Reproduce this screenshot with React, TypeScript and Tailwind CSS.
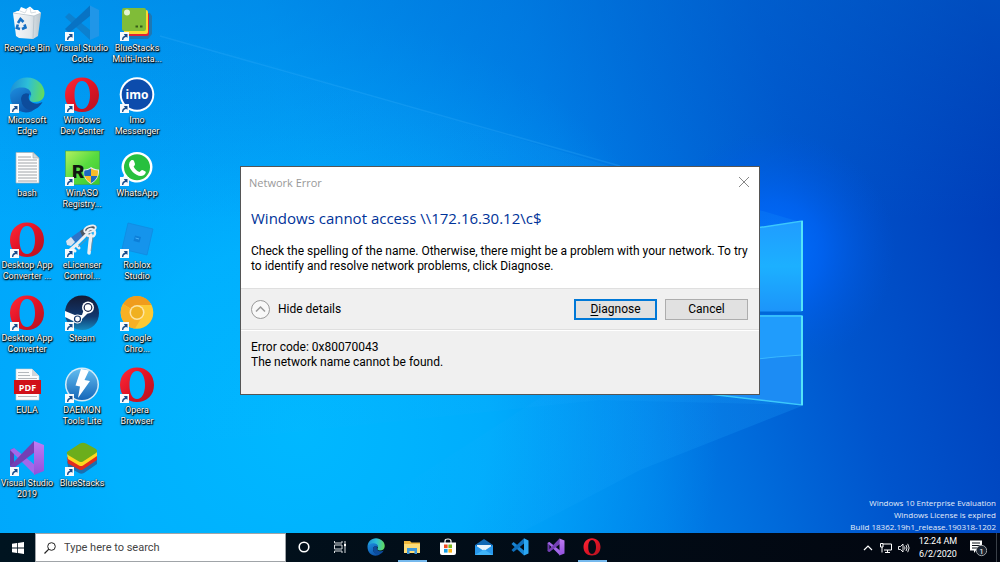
import type { ReactNode } from "react";

type DesktopIcon = {
  label: string;
  icon: ReactNode;
  shortcut?: boolean;
};

// gradients shared by the desktop and taskbar icons
const Defs = () => (
  <svg className="absolute h-0 w-0" aria-hidden="true">
    <defs>
      <linearGradient id="opera" x1="0" y1="0" x2="1" y2="1">
        <stop offset="0" stopColor="#ff2a38" />
        <stop offset="0.5" stopColor="#e01325" />
        <stop offset="1" stopColor="#b01420" />
      </linearGradient>
      <linearGradient id="edgeTop" x1="0" y1="0.4" x2="1" y2="0.5">
        <stop offset="0" stopColor="#1c8fd6" />
        <stop offset="0.5" stopColor="#2dbfd8" />
        <stop offset="1" stopColor="#62dc5c" />
      </linearGradient>
      <linearGradient id="edgeLow" x1="0" y1="0" x2="0.6" y2="1">
        <stop offset="0" stopColor="#1d8fe0" />
        <stop offset="1" stopColor="#0c52a8" />
      </linearGradient>
      <linearGradient id="green" x1="0" y1="0" x2="1" y2="1">
        <stop offset="0" stopColor="#b4f060" />
        <stop offset="0.5" stopColor="#58dc40" />
        <stop offset="1" stopColor="#3cc830" />
      </linearGradient>
      <linearGradient id="steam" x1="0" y1="0" x2="0" y2="1">
        <stop offset="0" stopColor="#141a34" />
        <stop offset="0.6" stopColor="#12386e" />
        <stop offset="1" stopColor="#1788bc" />
      </linearGradient>
      <linearGradient id="daemon" x1="0" y1="0" x2="0" y2="1">
        <stop offset="0" stopColor="#62bdf0" />
        <stop offset="1" stopColor="#1566b8" />
      </linearGradient>
      <linearGradient id="bin" x1="0" y1="0" x2="1" y2="0">
        <stop offset="0" stopColor="#f6f8fa" />
        <stop offset="0.6" stopColor="#e2e8ec" />
        <stop offset="1" stopColor="#b8c4cc" />
      </linearGradient>
      <linearGradient id="purple" x1="0" y1="0" x2="0" y2="1">
        <stop offset="0" stopColor="#c07cf4" />
        <stop offset="1" stopColor="#9150dc" />
      </linearGradient>
    </defs>
  </svg>
);

const Svg = ({ children, className = "size-9" }: { children: ReactNode; className?: string }) => (
  <svg viewBox="0 0 36 36" className={className} aria-hidden="true">
    {children}
  </svg>
);

const RecycleBin = () => (
  <Svg>
    <path d="M4 8 L8 6 L29 6 L32 8 L29 31 L24 34 L10 33 L7 31 Z" fill="url(#bin)" />
    <path d="M4 8 L10 6 L12 2 L17 4 L21 1.500 L25 5 L29 5 L32 8 L25 11 L10 10 Z" fill="#fff" />
    <path d="M4 8 L25 11 L32 8 M25 11 L24 34" fill="none" stroke="#b4c2cc" strokeWidth="0.8" />
    <path d="M11 6 L16 8 L18 4 M21 3 L22 8 L27 7" fill="none" stroke="#ccd4da" strokeWidth="0.8" />
    <g fill="none" stroke="#1670c4" strokeWidth="2.600">
      <path d="M9 18 L11.500 14 L14.500 17" />
      <path d="M15.500 19.500 L16.500 22.500 L13 24" />
      <path d="M11 24 L7.800 23 L8.800 19.500" />
    </g>
  </Svg>
);

const VsCode = ({ className, faded }: { className?: string; faded?: boolean }) => (
  <Svg className={className}>
    <path d="M1 12 L5 8 L26 25 V35 Z" fill={faded ? "#0c80cf" : "#1785d4"} />
    <path d="M26 0.500 V11 L5 28 L1 24 Z" fill={faded ? "#0873c4" : "#0e6fbc"} />
    <path d="M26 0.500 L35 5 V31 L26 35 Z" fill={faded ? "#2096e8" : "#2ba6f2"} />
  </Svg>
);

const VisualStudio = ({ className }: { className?: string }) => (
  <Svg className={className}>
    <path d="M1 10 L5 8 V28 L1 26 Z" fill="#6a3aa8" />
    <path d="M1 10 L5 8 L26 25 V35 Z" fill="#a368ea" />
    <path d="M25 1 L26 12 L5 28 L1 26 Z" fill="#7440b4" />
    <path d="M25 1 L35 5 V31 L25 35 Z" fill="url(#purple)" />
  </Svg>
);

const MultiInstance = () => (
  <Svg>
    <path d="M10 8 H31 L33 11 V29 L29 34 H11 Z" fill="#1d78b4" />
    <rect x="7" y="8" width="23" height="23" rx="2" fill="#e02434" />
    <rect x="5" y="5" width="24" height="24" rx="2" fill="#f8dc30" />
    <rect x="3" y="3" width="24" height="23" rx="2" fill="#80bc38" />
    <circle cx="8" cy="7.500" r="3" fill="#e4f4d0" />
    <path d="M16.500 21.500 h2.500 M21 21.500 h2.500" stroke="#375c18" strokeWidth="2" />
  </Svg>
);

const Edge = ({ className }: { className?: string }) => (
  <Svg className={className}>
    <path d="M1 18 C1 8 8 0.500 18 0.500 C28 0.500 35.500 8 35.500 16 C35.500 22 31 25 26 25 C22 25 20 23.500 21 21 C23 18 21 12 13 12 C6 12 2 16 1 18 Z" fill="url(#edgeTop)" />
    <path d="M1 18 C3 12 8 10 14 10.500 C20 11 23 15 22 19 C20 15 12 16 12 22 C12 29 19 33 27 31 C24 34 21 35.500 17 35.500 C8 35 1 28 1 18 Z" fill="url(#edgeLow)" />
    <path d="M12 22 C12 17 17 15 20.500 17 C19 20 19 25 26 26.500 C29 27 31.500 26 33.500 25 C31 30 26 33 22 33 C16 32.500 12 28 12 22 Z" fill="#0d4c9c" />
  </Svg>
);

const Opera = ({ className }: { className?: string }) => (
  <Svg className={className}>
    <path
      fillRule="evenodd"
      d="M18 0.500 C28 0.500 35 8 35 18 C35 28 28 35 18 35 C8 35 1 28 1 18 C1 8 8 0.500 18 0.500 Z M18 4 C13 4 10.500 10 10.500 18 C10.500 26 13 32 18 32 C23 32 26 26 26 18 C26 10 23 4 18 4 Z"
      fill="url(#opera)"
    />
  </Svg>
);

const Imo = () => (
  <Svg>
    <circle cx="18" cy="17.500" r="17.300" fill="#fff" />
    <circle cx="18" cy="17.500" r="15.300" fill="#0c4cac" />
    <text x="18" y="21.500" textAnchor="middle" fontFamily="Open Sans, sans-serif" fontWeight="700" fontSize="12" fill="#fff">
      imo
    </text>
  </Svg>
);

const TextFile = () => (
  <Svg>
    <path d="M7 2.500 H24 L30 8 V33 H7 Z" fill="#fdfdfd" stroke="#a8b0b4" strokeWidth="0.700" />
    <path d="M24 2.500 V8 H30 Z" fill="#d4dadc" stroke="#9aa4aa" strokeWidth="0.600" />
    <path d="M9 7 H22 M9 10 H28 M9 13 H28 M9 16 H28 M9 19 H28 M9 22 H28 M9 25 H28 M9 28 H28 M9 31 H28" stroke="#a0a4a8" strokeWidth="1" />
  </Svg>
);

const WinAso = () => (
  <Svg>
    <rect x="1.500" y="1" width="34" height="33.500" fill="url(#green)" stroke="#48a840" strokeWidth="0.600" />
    <text x="8" y="28" fontFamily="Roboto, sans-serif" fontWeight="900" fontSize="19" fill="#101810">
      R
    </text>
    <path d="M27 17 C30 19 33 19.500 35 19.500 C35.500 27 32 31 27 34 C22 31 19 27 19.500 19.500 C22 19.500 25 19 27 17 Z" fill="#e8eef4" />
    <path d="M27 18.500 V26 H20.500 C20 24 20 22 20.500 20.500 Q24 20.500 27 18.500 Z M27 26 H33.500 C32 29.500 30 31.500 27 33 Z" fill="#1c68c0" />
    <path d="M27 18.500 V26 H33.500 C34 24 34 22 34 20.500 Q30 20.500 27 18.500 Z M27 26 H20.500 C22 29.500 24 31.500 27 33 Z" fill="#f8bc28" />
  </Svg>
);

const WhatsApp = () => (
  <Svg>
    <path d="M18 2 C27 2 33.500 9 33.500 17 C33.500 26 26 32.500 18 32.500 C15 32.500 12.500 32 10.500 30.500 L2.500 33 L5 25 C3.500 22 2.500 20 2.500 17 C2.500 9 9 2 18 2 Z" fill="#fff" />
    <circle cx="18" cy="17.300" r="13" fill="#27c03e" />
    <path d="M12.500 10 Q14.500 9.500 15 11 L16 14 Q16.200 15 14.600 16.500 C16 19.500 18 21 20.500 22 L22.500 20.200 Q23 19.800 24 20.200 L26.500 21.500 C27.500 22.500 25.500 26 22 26 C16 26 10 19 10 14.500 Q10 11.500 12.500 10 Z" fill="#fff" />
  </Svg>
);

const License = () => (
  <Svg>
    <path d="M2 19 L16 9 L20 14 L7 24 L3 23 Z" fill="#2d74c8" />
    <path d="M2 19 L7 15 L11 20 L7 24 L3 23 Z" fill="#d8e4f0" />
    <path d="M16 9 L26 3 L33 4 L30 9 L19 16 Z" fill="#4c5864" />
    <g fill="none" stroke="#eceff2" strokeLinecap="round">
      <ellipse cx="26" cy="7" rx="6" ry="3" strokeWidth="2" transform="rotate(-20 26 7)" />
      <path d="M23 12 L13 22 L5 29 M12 23 L15 26 M8 26 L11 29" strokeWidth="3" />
      <path d="M27 13 L26 21 L25 31" strokeWidth="3.500" />
      <circle cx="27" cy="11" r="4" strokeWidth="2.500" />
    </g>
    <path d="M25 15 L14 25 M29 15 L27 29" stroke="#7c8894" strokeWidth="0.800" />
  </Svg>
);

const Roblox = () => (
  <Svg>
    <path d="M9 1 L34 7 L28 33 L3 27 Z" fill="#1594ec" stroke="#108ae0" strokeWidth="0.800" />
    <path d="M16 13.500 L22 15 L20.500 20.500 L14.500 19 Z" fill="#0d7fd8" />
    <path d="M16.500 16 L20 17" stroke="#48b4fc" strokeWidth="1" />
  </Svg>
);

const Steam = () => (
  <Svg>
    <path d="M1 18 C1 8 8 0.500 18 0.500 C28 0.500 35 8 35 18 C35 28 28 35 18 35 C10 35 4 30 2 24 Z" fill="url(#steam)" />
    <path d="M1 16 L12 20.500 L18 20 L20 14 L26 16 L18 24 C18 28 12 30 9 26 L1 22 Z" fill="#fff" />
    <circle cx="24" cy="12.500" r="6" fill="#fff" />
    <circle cx="24" cy="12.500" r="4.400" fill="#16244a" />
    <circle cx="24" cy="12.500" r="3.200" fill="#fff" />
    <circle cx="13.500" cy="24" r="4.500" fill="#fff" />
    <circle cx="13.500" cy="24" r="3" fill="none" stroke="#14356a" strokeWidth="1.200" />
  </Svg>
);

const Canary = () => (
  <Svg>
    <circle cx="18" cy="17.500" r="16.300" fill="#fcc934" />
    <path d="M18 17.500 L4 9 A16.300 16.300 0 0 1 32.500 10 H18 Z" fill="#f09c1c" />
    <path d="M4 9 A16.300 16.300 0 0 0 16 33.600 L23 22 Z" fill="#f8b024" />
    <circle cx="18" cy="17.500" r="7.500" fill="#fce4a4" />
    <circle cx="18" cy="17.500" r="6" fill="#f0b020" />
  </Svg>
);

const Pdf = () => (
  <Svg>
    <path d="M7 2 H23 L30 9 V33 H7 Z" fill="#fbfbfb" stroke="#c4ccd0" strokeWidth="0.600" />
    <path d="M23 2 V9 H30 Z" fill="#d0d6da" />
    <path d="M9 5.500 H20 M9 8.500 H21 M9 11.500 H28 M9 29.500 H28" stroke="#b4b8bc" strokeWidth="1.200" />
    <rect x="5" y="13" width="27" height="14" fill="#d01018" />
    <text x="18.500" y="23.500" textAnchor="middle" fontFamily="Open Sans, sans-serif" fontWeight="700" fontSize="9" fill="#fff">
      PDF
    </text>
  </Svg>
);

const Daemon = () => (
  <Svg>
    <circle cx="18" cy="17.500" r="17" fill="#d6ecf8" />
    <circle cx="18" cy="17.500" r="15.500" fill="url(#daemon)" />
    <path d="M17 2 L25 3.500 L20.500 13 L26 14 L14 31 L16 19.500 L11.500 18.500 Z" fill="#fff" />
  </Svg>
);

const BlueStacks = () => (
  <Svg>
    <path d="M3 21 L18 28 L33 19 V24 L20 33 Q17 34.500 15 33 L4 27 Z" fill="#1a6fb0" />
    <path d="M3 17 L18 24 L33 15 V20 L19 29.500 Q17 30.500 15 29.500 L4 23.500 Z" fill="#e02c20" />
    <path d="M3 14 L18 20 L33 12 V16 L19 25.500 Q17 26.500 15 25.500 L4 19 Z" fill="#fcd820" />
    <path d="M3 12 L16 3.500 Q19 2 22 3.500 L32 9 Q34 11 32 13 L19 21.500 Q17 22.500 15 21.500 L4 15 Q2 13.500 3 12 Z" fill="#6cae1c" />
  </Svg>
);

const desktopIcons: DesktopIcon[] = [
  { label: "Recycle Bin", icon: <RecycleBin /> },
  { label: "Microsoft\nEdge", icon: <Edge />, shortcut: true },
  { label: "bash", icon: <TextFile /> },
  { label: "Desktop App\nConverter ...", icon: <Opera />, shortcut: true },
  { label: "Desktop App\nConverter", icon: <Opera />, shortcut: true },
  { label: "EULA", icon: <Pdf /> },
  { label: "Visual Studio\n2019", icon: <VisualStudio />, shortcut: true },
  { label: "Visual Studio\nCode", icon: <VsCode faded />, shortcut: true },
  { label: "Windows\nDev Center", icon: <Opera />, shortcut: true },
  { label: "WinASO\nRegistry...", icon: <WinAso />, shortcut: true },
  { label: "eLicenser\nControl...", icon: <License />, shortcut: true },
  { label: "Steam", icon: <Steam />, shortcut: true },
  { label: "DAEMON\nTools Lite", icon: <Daemon />, shortcut: true },
  { label: "BlueStacks", icon: <BlueStacks />, shortcut: true },
  { label: "BlueStacks\nMulti-Insta...", icon: <MultiInstance />, shortcut: true },
  { label: "Imo\nMessenger", icon: <Imo />, shortcut: true },
  { label: "WhatsApp", icon: <WhatsApp />, shortcut: true },
  { label: "Roblox\nStudio", icon: <Roblox />, shortcut: true },
  { label: "Google\nChro...", icon: <Canary />, shortcut: true },
  { label: "Opera\nBrowser", icon: <Opera />, shortcut: true },
];

const ShortcutArrow = () => (
  <svg viewBox="0 0 9 9" className="absolute bottom-0 left-px size-[9px]" aria-hidden="true">
    <rect width="9" height="9" fill="#f6fafc" />
    <path d="M2 8 C2 5.500 3 4 5 3.700 L3.800 2 H7.500 V5.800 L6.200 4.900 C4.500 5.200 3.500 6 3.300 8 Z" fill="#184c8c" />
  </svg>
);

const Wallpaper = () => (
  <svg viewBox="0 0 1000 533" preserveAspectRatio="none" className="absolute inset-0 h-full w-full" aria-hidden="true">
    <defs>
      <linearGradient id="base" x1="0" y1="0.300" x2="1" y2="0.150">
        <stop offset="0" stopColor="#00a8fc" />
        <stop offset="0.300" stopColor="#009cf8" />
        <stop offset="0.550" stopColor="#007ee8" />
        <stop offset="0.780" stopColor="#0054cc" />
        <stop offset="1" stopColor="#003ab6" />
      </linearGradient>
      <radialGradient id="low" gradientUnits="userSpaceOnUse" cx="300" cy="430" r="420">
        <stop offset="0" stopColor="#00b8ff" />
        <stop offset="0.450" stopColor="#00b4ff" stopOpacity="0.800" />
        <stop offset="1" stopColor="#00a0f8" stopOpacity="0" />
      </radialGradient>
      <radialGradient id="glow" gradientUnits="userSpaceOnUse" cx="775" cy="250" r="120">
        <stop offset="0" stopColor="#0070ff" />
        <stop offset="0.400" stopColor="#0066fa" stopOpacity="0.700" />
        <stop offset="1" stopColor="#0058e0" stopOpacity="0" />
      </radialGradient>
      <linearGradient id="top" x1="0" y1="0" x2="0" y2="1">
        <stop offset="0" stopColor="#0070d0" stopOpacity="0.350" />
        <stop offset="1" stopColor="#0070d0" stopOpacity="0" />
      </linearGradient>
      <linearGradient id="beam" x1="0" y1="0" x2="1" y2="0">
        <stop offset="0" stopColor="#20b0ff" stopOpacity="0" />
        <stop offset="1" stopColor="#20a8ff" stopOpacity="0.450" />
      </linearGradient>
      <linearGradient id="pane" x1="0" y1="0" x2="0" y2="1">
        <stop offset="0" stopColor="#209cff" />
        <stop offset="0.500" stopColor="#1cb0ff" />
        <stop offset="1" stopColor="#1c94fa" />
      </linearGradient>
    </defs>
    <rect width="1000" height="533" fill="url(#base)" />
    <rect width="1000" height="533" fill="url(#low)" />
    <rect width="1000" height="220" fill="url(#top)" />
    <rect width="1000" height="533" fill="url(#glow)" />
    <path d="M120 20 L640 175 L800 222 V405 L600 400 L120 450 Z" fill="url(#beam)" opacity="0.350" />
    <path d="M560 385 L700 394 L802 406 L640 470 L520 533 H330 Z" fill="url(#beam)" opacity="0.500" />
    <path d="M160 36 L620 166" stroke="#38b0fa" strokeOpacity="0.250" strokeWidth="1.500" />
    <path d="M640 246 L802 221 V312 H640 Z" fill="url(#pane)" />
    <path d="M640 315 H802 V405 L640 386 Z" fill="#209cfc" />
    <path d="M640 380 Q730 360 802 355 V405 L640 386 Z" fill="#1c8cf4" />
    <path d="M700 368 Q750 358 802 355" fill="none" stroke="#38b8ff" strokeWidth="1" />
    <path d="M640 246 L802 221 V311 M640 316 H802 V405 L640 386" fill="none" stroke="#3cc8fc" strokeWidth="1.500" />
    <path d="M802 221 V311 M802 316 V405" stroke="#54e4f8" strokeWidth="2" />
    <path d="M640 313 H803" stroke="#0068d8" strokeWidth="3" />
  </svg>
);

const NetworkErrorDialog = () => (
  <section
    role="dialog"
    aria-labelledby="dialog-title"
    className="pointer-events-auto w-[520px] max-w-full border border-[#555] bg-white font-[Roboto,sans-serif] text-xs leading-[15px] text-black"
  >
    <header className="flex h-[30px] items-center justify-between pr-2.5 pl-2">
      <h1 id="dialog-title" className="font-['Open_Sans',sans-serif] text-[11px] text-[#999]">
        Network Error
      </h1>
      <button type="button" aria-label="Close">
        <svg viewBox="0 0 10 10" className="size-2.5" aria-hidden="true">
          <path d="M0 0 L10 10 M10 0 L0 10" stroke="#888" strokeWidth="1" />
        </svg>
      </button>
    </header>
    <div className="flex flex-col gap-4 px-2.5 pt-[11px] pb-3.5">
      <h2 className="font-['Open_Sans',sans-serif] text-[15px] leading-5 text-[#003399]">
        Windows cannot access \\172.16.30.12\c$
      </h2>
      <p>
        Check the spelling of the name. Otherwise, there might be a problem with your network. To try to identify and
        resolve network problems, click Diagnose.
      </p>
    </div>
    <div className="flex h-[42px] items-center justify-between border-y border-[#dfdfdf] bg-[#f0f0f0] pr-[11px] pl-2.5">
      <button type="button" className="flex items-center gap-2">
        <svg viewBox="0 0 19 19" className="size-[19px]" aria-hidden="true">
          <circle cx="9.500" cy="9.500" r="9" fill="#f8f8f8" stroke="#999" />
          <path d="M5 11.500 L9.500 7 L14 11.500" fill="none" stroke="#999" strokeWidth="1.500" />
        </svg>
        Hide details
      </button>
      <div className="flex gap-2">
        <button type="button" className="h-[21px] w-[83px] border-2 border-[#0078d7] bg-[#e1e1e1]">
          <span className="underline underline-offset-2">D</span>iagnose
        </button>
        <button type="button" className="h-[21px] w-[83px] border border-[#adadad] bg-[#e1e1e1]">
          Cancel
        </button>
      </div>
    </div>
    <div className="border-t border-white bg-[#f0f0f0] px-2.5 pt-[9px] pb-6">
      <p>Error code: 0x80070043</p>
      <p>The network name cannot be found.</p>
    </div>
  </section>
);

const taskbarApps = [
  {
    name: "Cortana",
    icon: (
      <svg viewBox="0 0 18 18" className="size-[18px]" aria-hidden="true">
        <circle cx="9" cy="9" r="4.800" fill="none" stroke="#fff" strokeWidth="1.600" />
      </svg>
    ),
  },
  {
    name: "Task View",
    icon: (
      <svg viewBox="0 0 18 18" className="size-[18px]" aria-hidden="true">
        <path d="M3.500 3 V5 H11 V3 M3.500 15 V13 H11 V15 M3.500 7 H11 V11 H3.500 Z M14 3 V6 M14 9 V15" fill="none" stroke="#d8dcde" strokeWidth="1" />
        <rect x="13" y="6" width="2" height="2.500" fill="#fff" />
      </svg>
    ),
  },
  { name: "Microsoft Edge", icon: <Edge className="size-[18px]" /> },
  {
    name: "File Explorer",
    open: true,
    icon: (
      <svg viewBox="0 0 18 18" className="size-[18px]" aria-hidden="true">
        <path d="M1 3 H7 L8.500 4.500 H17 V15 H1 Z" fill="#f0b83c" />
        <path d="M1 6 H17 V15 H1 Z" fill="#fcdc78" />
        <path d="M4 10 H14 V16 H11.500 V13 H6.500 V16 H4 Z" fill="#3c98dc" />
      </svg>
    ),
  },
  {
    name: "Microsoft Store",
    icon: (
      <svg viewBox="0 0 18 18" className="size-[18px]" aria-hidden="true">
        <path d="M6 5 V3 Q6 1 9 1 Q12 1 12 3 V5" fill="none" stroke="#fff" strokeWidth="1.200" />
        <path d="M1 4.500 H17 V15 Q17 17 15 17 H3 Q1 17 1 15 Z" fill="#fff" />
        <rect x="5" y="6.500" width="3.600" height="3.600" fill="#f04c24" />
        <rect x="9.400" y="6.500" width="3.600" height="3.600" fill="#7cb81c" />
        <rect x="5" y="11" width="3.600" height="3.600" fill="#14a0e8" />
        <rect x="9.400" y="11" width="3.600" height="3.600" fill="#fcb414" />
      </svg>
    ),
  },
  {
    name: "Mail",
    icon: (
      <svg viewBox="0 0 18 18" className="size-[18px]" aria-hidden="true">
        <path d="M0 7 L9 1 L18 7 V17 H0 Z" fill="#1068b4" />
        <path d="M2 7 H16 V13 H2 Z" fill="#e8f4fc" />
        <path d="M0 7 L9 13 L18 7 V17 H0 Z" fill="#2898ec" />
        <path d="M0 17 L9 11.500 L18 17 Z" fill="#40b4f8" />
      </svg>
    ),
  },
  { name: "Visual Studio Code", icon: <VsCode className="size-[18px]" /> },
  { name: "Visual Studio", icon: <VisualStudio className="size-[18px]" /> },
  { name: "Opera", open: true, icon: <Opera className="size-[18px]" /> },
];

const Taskbar = () => (
  <footer className="flex h-[29px] shrink-0 items-stretch bg-linear-to-r from-[#001420] to-[#02060f] font-[Roboto,sans-serif] text-white">
    <button type="button" aria-label="Start" className="flex w-[35px] items-center justify-center">
      <svg viewBox="0 0 12 12" className="size-3" aria-hidden="true">
        <path d="M0 1.700 L5 1 V5.600 H0 Z M5.800 0.900 L12 0 V5.600 H5.800 Z M0 6.400 H5 V11 L0 10.300 Z M5.800 6.400 H12 V12 L5.800 11.100 Z" fill="#fff" />
      </svg>
    </button>
    <div className="flex w-[251px] items-center gap-2 border border-[#a0a4a8] bg-white pl-2">
      <label htmlFor="search" aria-label="Search">
        <svg viewBox="0 0 12 12" className="size-3" aria-hidden="true">
          <circle cx="7.500" cy="4.500" r="3.800" fill="none" stroke="#222" />
          <path d="M4.800 7.200 L0.500 11.500" stroke="#222" strokeWidth="1.200" />
        </svg>
      </label>
      <input
        id="search"
        type="text"
        placeholder="Type here to search"
        className="min-w-0 flex-1 self-stretch pt-0.5 text-[11px] text-black outline-none placeholder:text-[#444]"
      />
    </div>
    <nav className="flex">
      {taskbarApps.map((app) => (
        <button
          key={app.name}
          type="button"
          aria-label={app.name}
          className="flex w-9 flex-col items-center justify-between pt-[5px]"
        >
          {app.icon}
          {app.open && <span className="h-0.5 w-[29px] bg-[#76b9ed]" />}
        </button>
      ))}
    </nav>
    <div className="ml-auto flex items-center gap-1.5">
      <button type="button" aria-label="Show hidden icons">
        <svg viewBox="0 0 12 12" className="size-3" aria-hidden="true">
          <path d="M2 8 L6 4 L10 8" fill="none" stroke="#fff" strokeWidth="1.200" />
        </svg>
      </button>
      <button type="button" aria-label="Network">
        <svg viewBox="0 0 12 12" className="size-3" aria-hidden="true">
          <path d="M3 2 H11.500 V8 H4 M7.500 8 V10.500 M5 10.500 H10 M0.500 1.500 H3 V5 H0.500 Z M2 5 V10.500" fill="none" stroke="#fff" />
        </svg>
      </button>
      <button type="button" aria-label="Volume">
        <svg viewBox="0 0 12 12" className="size-3" aria-hidden="true">
          <path d="M0.500 4.500 H2.500 L5 2 V10 L2.500 7.500 H0.500 Z M6.500 4.500 Q7.500 6 6.500 7.500 M8 3 Q10 6 8 9 M9.700 1.800 Q12.500 6 9.700 10.200" fill="none" stroke="#fff" strokeWidth="0.900" />
        </svg>
      </button>
      <time className="flex w-11 flex-col items-center text-[9px] leading-[13px]">
        <span>12:24 AM</span>
        <span>6/2/2020</span>
      </time>
      <button type="button" aria-label="Notifications" className="flex w-6 justify-center">
        <svg viewBox="0 0 18 18" className="size-[18px]" aria-hidden="true">
          <path d="M1 1.500 H13 V11.500 H7 L5 14 V11.500 H1 Z" fill="#fff" />
          <path d="M3 4 H11 M3 6.500 H11 M3 9 H9" stroke="#0a1018" />
          <circle cx="12.500" cy="11.500" r="5.200" fill="#1c2430" stroke="#9ca0a4" />
          <text x="12.500" y="14.500" textAnchor="middle" fontFamily="Roboto, sans-serif" fontSize="8" fill="#fff">
            1
          </text>
        </svg>
      </button>
      <button type="button" aria-label="Show desktop" className="w-1 self-stretch border-l border-[#3a4048]" />
    </div>
  </footer>
);

export default function App() {
  return (
    <div className="relative flex h-screen flex-col overflow-hidden font-['Open_Sans',sans-serif]">
      <Defs />
      <main className="relative flex min-h-0 flex-1 items-stretch justify-between">
        <Wallpaper />
        <div className="relative grid auto-cols-[55px] grid-flow-col grid-rows-7 pb-[26px]">
          {desktopIcons.map((item, index) => (
            <button key={index} type="button" className="flex flex-col items-center pt-[5px] pr-px">
              <span className="relative">
                {item.icon}
                {item.shortcut && <ShortcutArrow />}
              </span>
              <span className="mt-0.5 font-[Roboto,sans-serif] text-[9px] leading-[11px] whitespace-pre text-white [text-shadow:0_0_1px_#000,1px_1px_1px_#000,0_1px_2px_#000]">
                {item.label}
              </span>
            </button>
          ))}
        </div>
        <div className="relative self-end pr-1 text-right text-[8px] leading-3 text-[#e4ecf8]">
          <p>Windows 10 Enterprise Evaluation</p>
          <p>Windows License is expired</p>
          <p>Build 18362.19h1_release.190318-1202</p>
        </div>
      </main>
      <Taskbar />
      <div className="pointer-events-none absolute inset-0 flex items-center justify-center pb-px">
        <NetworkErrorDialog />
      </div>
    </div>
  );
}
